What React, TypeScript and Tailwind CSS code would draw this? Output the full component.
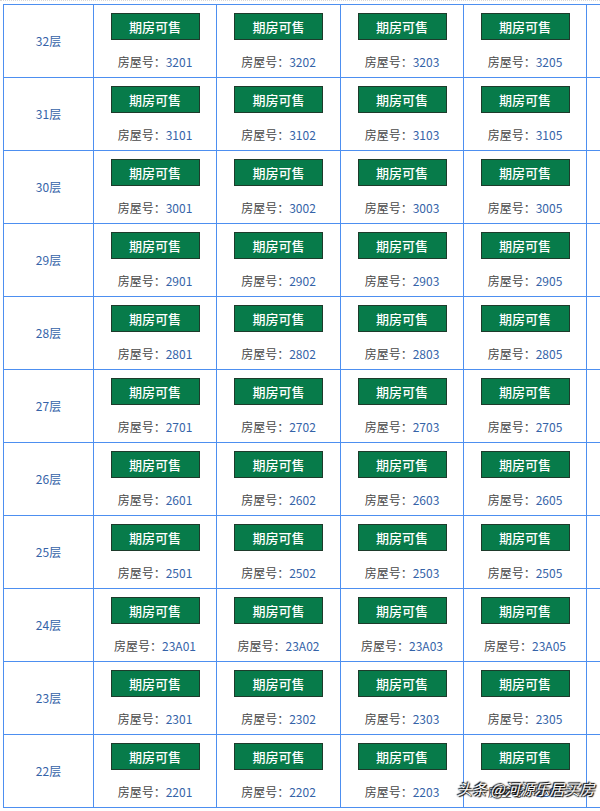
import React from 'react';

const floors = [32, 31, 30, 29, 28, 27, 26, 25, 24, 23, 22];
const units = ['01', '02', '03', '05'];

function roomNo(floor: number, unit: string) {
  // 24层 is labelled 23A on the sales board
  return floor === 24 ? `23A${unit}` : `${floor}${unit}`;
}

function UnitCell({ no }: { no: string }) {
  return (
    <div className="flex flex-col items-center bg-white pt-2">
      <div className="flex h-[27px] w-[89px] items-center justify-center border border-[#1d3b2b] bg-[#077b4a] text-[13px] font-medium text-white">
        期房可售
      </div>
      <div className="mt-[14px] text-[12px] leading-[16px] text-[#4a4a4a]">
        房屋号：<span className="text-[#3563a8]">{no}</span>
      </div>
    </div>
  );
}

export default function App() {
  return (
    <div
      className="relative h-[811px] w-[600px] overflow-hidden bg-white"
      style={{ fontFamily: '"Noto Sans CJK SC", "Noto Sans", sans-serif' }}
    >
      {/* remnant of the row above */}
      <div className="h-[4px] border-t border-dotted border-[#d8d8d8]" />

      <div className="ml-[3px] grid w-[620px] grid-cols-[89px_122px_123px_122px_122px_1fr] auto-rows-[72px] gap-px border-l border-t border-[#4d8ff0] bg-[#4d8ff0] pb-px">
        {floors.map((f) => (
          <React.Fragment key={f}>
            <div className="flex items-center justify-center bg-white text-[12px] text-[#3563a8]">
              {f}层
            </div>
            {units.map((u) => (
              <UnitCell key={u} no={roomNo(f, u)} />
            ))}
            <div className="bg-white" />
          </React.Fragment>
        ))}
      </div>

      {/* watermark */}
      <div
        className="absolute left-[457px] top-[779px] whitespace-nowrap text-[15px] italic leading-[20px] text-white"
        style={{ textShadow: '0 0 2px #000, 1px 1px 1px #000, -1px -1px 1px #000' }}
      >
        头条 @河源乐居买房
      </div>
    </div>
  );
}
